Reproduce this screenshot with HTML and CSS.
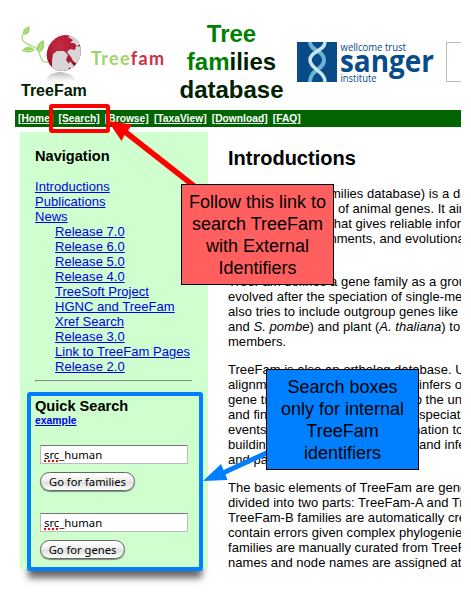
FILE: index.html
```
<!DOCTYPE html>
<html lang="en">
<head>
<meta charset="utf-8">
<title>TreeFam</title>
<link rel="stylesheet" href="styles.css">
</head>
<body>
<div class="frame-shadow"></div>
<div class="page">
  <header class="header">
    <div class="brand">
      <svg class="brand-logo" width="147" height="62" viewBox="20 23 147 62">
        <defs>
          <radialGradient id="globe" cx="40%" cy="30%" r="75%"><stop offset="0" stop-color="#c52d42"/><stop offset=".6" stop-color="#a8162c"/><stop offset="1" stop-color="#710b1b"/></radialGradient>
          <linearGradient id="fade" x1="0" y1="0" x2="0" y2="1"><stop offset="0" stop-color="#999" stop-opacity=".75"/><stop offset="1" stop-color="#ddd" stop-opacity="0"/></linearGradient>
          <clipPath id="ball"><ellipse cx="63.800" cy="53" rx="16.500" ry="18.500" transform="rotate(32 63.800 53)"/></clipPath>
        </defs>
        <path d="M48 62C38 64 42 49 34 47C28 44 22 43 22 37C22 34 25 33 27 33" fill="none" stroke="#a5d977" stroke-width="1.300"/>
        <path d="M23 35C22 29 26 28 29.500 26C30 31 29 35 23 35ZM22 51C26 45 31 46 35 50C31 53 26 53 22 51ZM38 52C35 45 40 42 43.500 40C45 46 44 52 38 52Z" fill="#9bd568"/>
        <path d="M23 35L28 29M24 51L33 50M39 51L42 43" stroke="#d7f3bd" stroke-width=".7"/>
        <path d="M46 80Q48 73 60 72Q72 73 76 80L72 83H50Z" fill="url(#fade)"/>
        <g clip-path="url(#ball)">
          <path d="M44 33H84V74H44Z" fill="url(#globe)"/>
          <path d="M53 54L57 51L64 51L68 55L66 60L70 65L68 71L60 74L52 70L52 61ZM67 52L70 49L75 50L76 46L84 47L82 58L77 64L73 61L71 57ZM68 37L72 35L78 39L81 44L77 46L74 43L70 43L73 40ZM70 61L74 66L71 69L68 66Z" fill="#d8d5d6"/>
        </g>
        <text x="91" y="65" class="logo-word" textLength="73"><tspan fill="#9fd568">Tree</tspan><tspan fill="#c93249">fam</tspan></text>
      </svg>
      <div class="brand-name">TreeFam</div>
    </div>
    <h1 class="title"><span>Tree<br>fam</span>ilies<br>database</h1>
    <svg class="sanger" width="140" height="42" viewBox="297 42 140 42">
      <path d="M297 42H337V82H297Z" fill="#084b87"/>
      <path d="M310 42C310 51 324 50 324 60C324 70 310 69 310 82" fill="none" stroke="#69b4d3" stroke-width="4"/>
      <path d="M325 42C325 51 310 51 310 60C310 69 325 71 325 82" fill="none" stroke="#c8e6ef" stroke-width="3.500"/>
      <g fill="#084b87"><text x="340.500" y="51" class="sanger-small" textLength="65.500" lengthAdjust="spacingAndGlyphs">wellcome trust</text>
      <text x="340" y="72" class="sanger-big" textLength="94" lengthAdjust="spacingAndGlyphs">sanger</text>
      <text x="340.500" y="82" class="sanger-small" textLength="36" lengthAdjust="spacingAndGlyphs">institute</text></g>
    </svg>
    <div class="side-logo"></div>
  </header>
  <nav class="menu"><a>[Home]</a><a>[Search]</a><a>[Browse]</a><a>[TaxaView]</a><a>[Download]</a><a>[FAQ]</a></nav>
  <div class="columns">
    <aside class="sidebar">
      <h2>Navigation</h2>
      <ul class="links">
        <li><a>Introductions</a></li><li><a>Publications</a></li><li><a>News</a>
          <ul><li><a>Release 7.0</a></li><li><a>Release 6.0</a></li><li><a>Release 5.0</a></li><li><a>Release 4.0</a></li><li><a>TreeSoft Project</a></li><li><a>HGNC and TreeFam</a></li><li><a>Xref Search</a></li><li><a>Release 3.0</a></li><li><a>Link to TreeFam Pages</a></li><li><a>Release 2.0</a></li></ul>
        </li>
      </ul>
      <div class="rule"></div>
      <h2>Quick Search</h2>
      <a class="example">example</a>
      <form class="search">
        <div class="field"><span class="typo">src</span>_human</div>
        <button type="button" class="families">Go for families</button>
        <div class="field"><span class="typo">src</span>_human</div>
        <button type="button" class="genes">Go for genes</button>
      </form>
    </aside>
    <main class="content">
      <h2>Introductions</h2>
      <div class="para lead">
        <div class="line"><span>TreeFam (Tree</span>families database) is a database</div>
        <div class="line of"><span>of phylogenetic</span>of animal genes. It aims</div>
        <div class="line that"><span>resource</span>that gives reliable information</div>
        <div class="line align"><span>tree</span>alignments, and evolutionary</div>
      </div>
      <p class="para">TreeFam defines a gene family as a group<br>evolved after the speciation of single-metazoan<br>also tries to include outgroup genes like<br>and <i>S. pombe</i>) and plant (<i>A. thaliana</i>) to<br>members.</p>
      <div class="para">
        <div>TreeFam is also an ortholog database. Unlike</div>
        <div class="line infers"><span>alignment</span>infers orthologs</div>
        <div class="line to"><span>gene trees</span>to the universal</div>
        <div class="line infers"><span>and finds</span>speciation</div>
        <div class="line info"><span>events. This</span>information to</div>
        <div class="line infers"><span>building trees</span>and inferring</div>
        <div>and paralogs.</div>
      </div>
      <p class="para">The basic elements of TreeFam are gene<br>divided into two parts: TreeFam-A and Tree<br>TreeFam-B families are automatically created<br>contain errors given complex phylogenies<br>families are manually curated from TreeFam<br>names and node names are assigned at</p>
    </main>
  </div>
</div>
<svg class="marks" width="471" height="594">
  <rect x="51" y="106" width="57" height="25" rx="1" fill="none" stroke="#f00" stroke-width="4"/>
  <path d="M108 121L132 124.500L128 130.500L196 184H187L124.500 135L121.500 141Z" fill="#f00"/>
  <rect x="29" y="394" width="172" height="175" rx="1" fill="none" stroke="#0080ff" stroke-width="4"/>
  <path d="M203 481L221 464L223.500 470L267 450V455.500L225.500 474.500L227.500 480Z" fill="#0080ff"/>
</svg>
<div class="note note-red">Follow this link to<br>search TreeFam<br>with External<br>Identifiers</div>
<div class="note note-blue">Search boxes<br>only for internal<br>TreeFam<br>identifiers</div>
</body>
</html>
```
FILE: styles.css
```
* { box-sizing: border-box; }
body { margin: 0; height: 594px; position: relative; overflow: hidden; background: #fff; font: 13px/15px "Liberation Sans", Arial, sans-serif; color: #000; }
h1, h2, p, ul { margin: 0; padding: 0; }
ul { list-style: none; }
.page { position: relative; width: 446px; height: 569px; margin-left: 15px; overflow: hidden; background: #fff; }
.header { height: 110px; display: flex; padding-left: 5px; color: #002000; }
.brand { width: 147px; padding-top: 23px; }
.brand-logo { display: block; }
.logo-word { font: bold 18px Lato, sans-serif; }
.brand-name { padding-left: 1px; font: bold 16px/18px "Liberation Sans", sans-serif; margin-top: -3px; }
.title { width: 129px; flex: none; padding-top: 20px; font-size: 24px; line-height: 28px; text-align: center; }
.title span { color: #008000; }
.sanger { flex: none; margin: 42px 0 0 1px; }
.sanger-small { font: 10.3px "Open Sans", sans-serif; }
.sanger-big { font: bold 31px "Open Sans", sans-serif; }
.side-logo { flex: none; width: 40px; height: 40px; margin: 42px 0 0 9px; border: 1px solid #bbb; }
.menu { height: 17px; display: flex; gap: 5.2px; padding-left: 3px; background: #006400; color: #fff; font: bold 10.2px/17px "Liberation Sans", sans-serif; letter-spacing: .04px; }
.menu a, .links a, .example { text-decoration: underline; }
.columns { display: flex; height: 437px; margin-top: 5px; padding-left: 5px; }
.sidebar { flex: none; width: 188px; padding: 15px 15px 0; background: #cfffcf; }
.sidebar h2 { font-size: 14.6px; line-height: 18px; }
.links { margin-top: 14px; color: #0000ee; white-space: nowrap; letter-spacing: .03px; }
.links ul { padding-left: 20px; }
.rule { width: 157px; height: 2px; margin: 6px 0 15px; border-top: 1px solid #888; border-left: 1px solid #999; }
.example { display: block; width: max-content; color: #0000ee; font: bold 10.4px/12px "Liberation Sans", sans-serif; }
.search { padding: 18px 0 0 5px; }
.field { width: 148px; height: 19px; padding-left: 3px; border: 1px solid #bbb; border-top: 1px solid #777; background: #fff; font: 11.3px/18px "Noto Sans", sans-serif; }
.typo { text-decoration: underline dotted #f00; text-decoration-thickness: 2px; text-underline-offset: 1px; }
.search button { display: block; height: 19px; margin: 8px 0 22px; padding: 0; border: 1px solid #666; border-radius: 10px; background: linear-gradient(#fff, #eee 48%, #ddd 52%, #fff); box-shadow: 0 1px 1px #7a917a; font: 11.2px/16px "Noto Sans", sans-serif; color: #000; white-space: nowrap; }
.search .families { width: 95px; }
.search .genes { width: 85px; }
.content { padding: 14px 0 0 20px; white-space: nowrap; }
.content h2 { font-size: 20px; line-height: 24px; }
.para { margin-bottom: 13px; letter-spacing: .04px; }
.lead { margin: 16px 0 28px; }
.line { display: flex; }
.line span { flex: none; width: 91px; overflow: hidden; }
.line.of span { width: 110px; }
.line.that span { width: 102px; }
.line.align span { width: 81px; }
.line.infers span { width: 191px; }
.line.to span { width: 183px; }
.line.info span { width: 156px; }
.frame-shadow { position: absolute; left: 29px; top: 394px; width: 172px; height: 177px; box-shadow: 0 6px 7px 1px rgba(0,0,0,.6); }
.marks { position: absolute; left: 0; top: 0; }
.note { position: absolute; width: 153px; height: 101px; padding-top: 6px; border: 1px solid #000; font-size: 18px; line-height: 22px; text-align: center; white-space: nowrap; }
.note-red { left: 181px; top: 184px; background: #ff5f5f; }
.note-blue { left: 266px; top: 369px; background: #0080ff; }
```
